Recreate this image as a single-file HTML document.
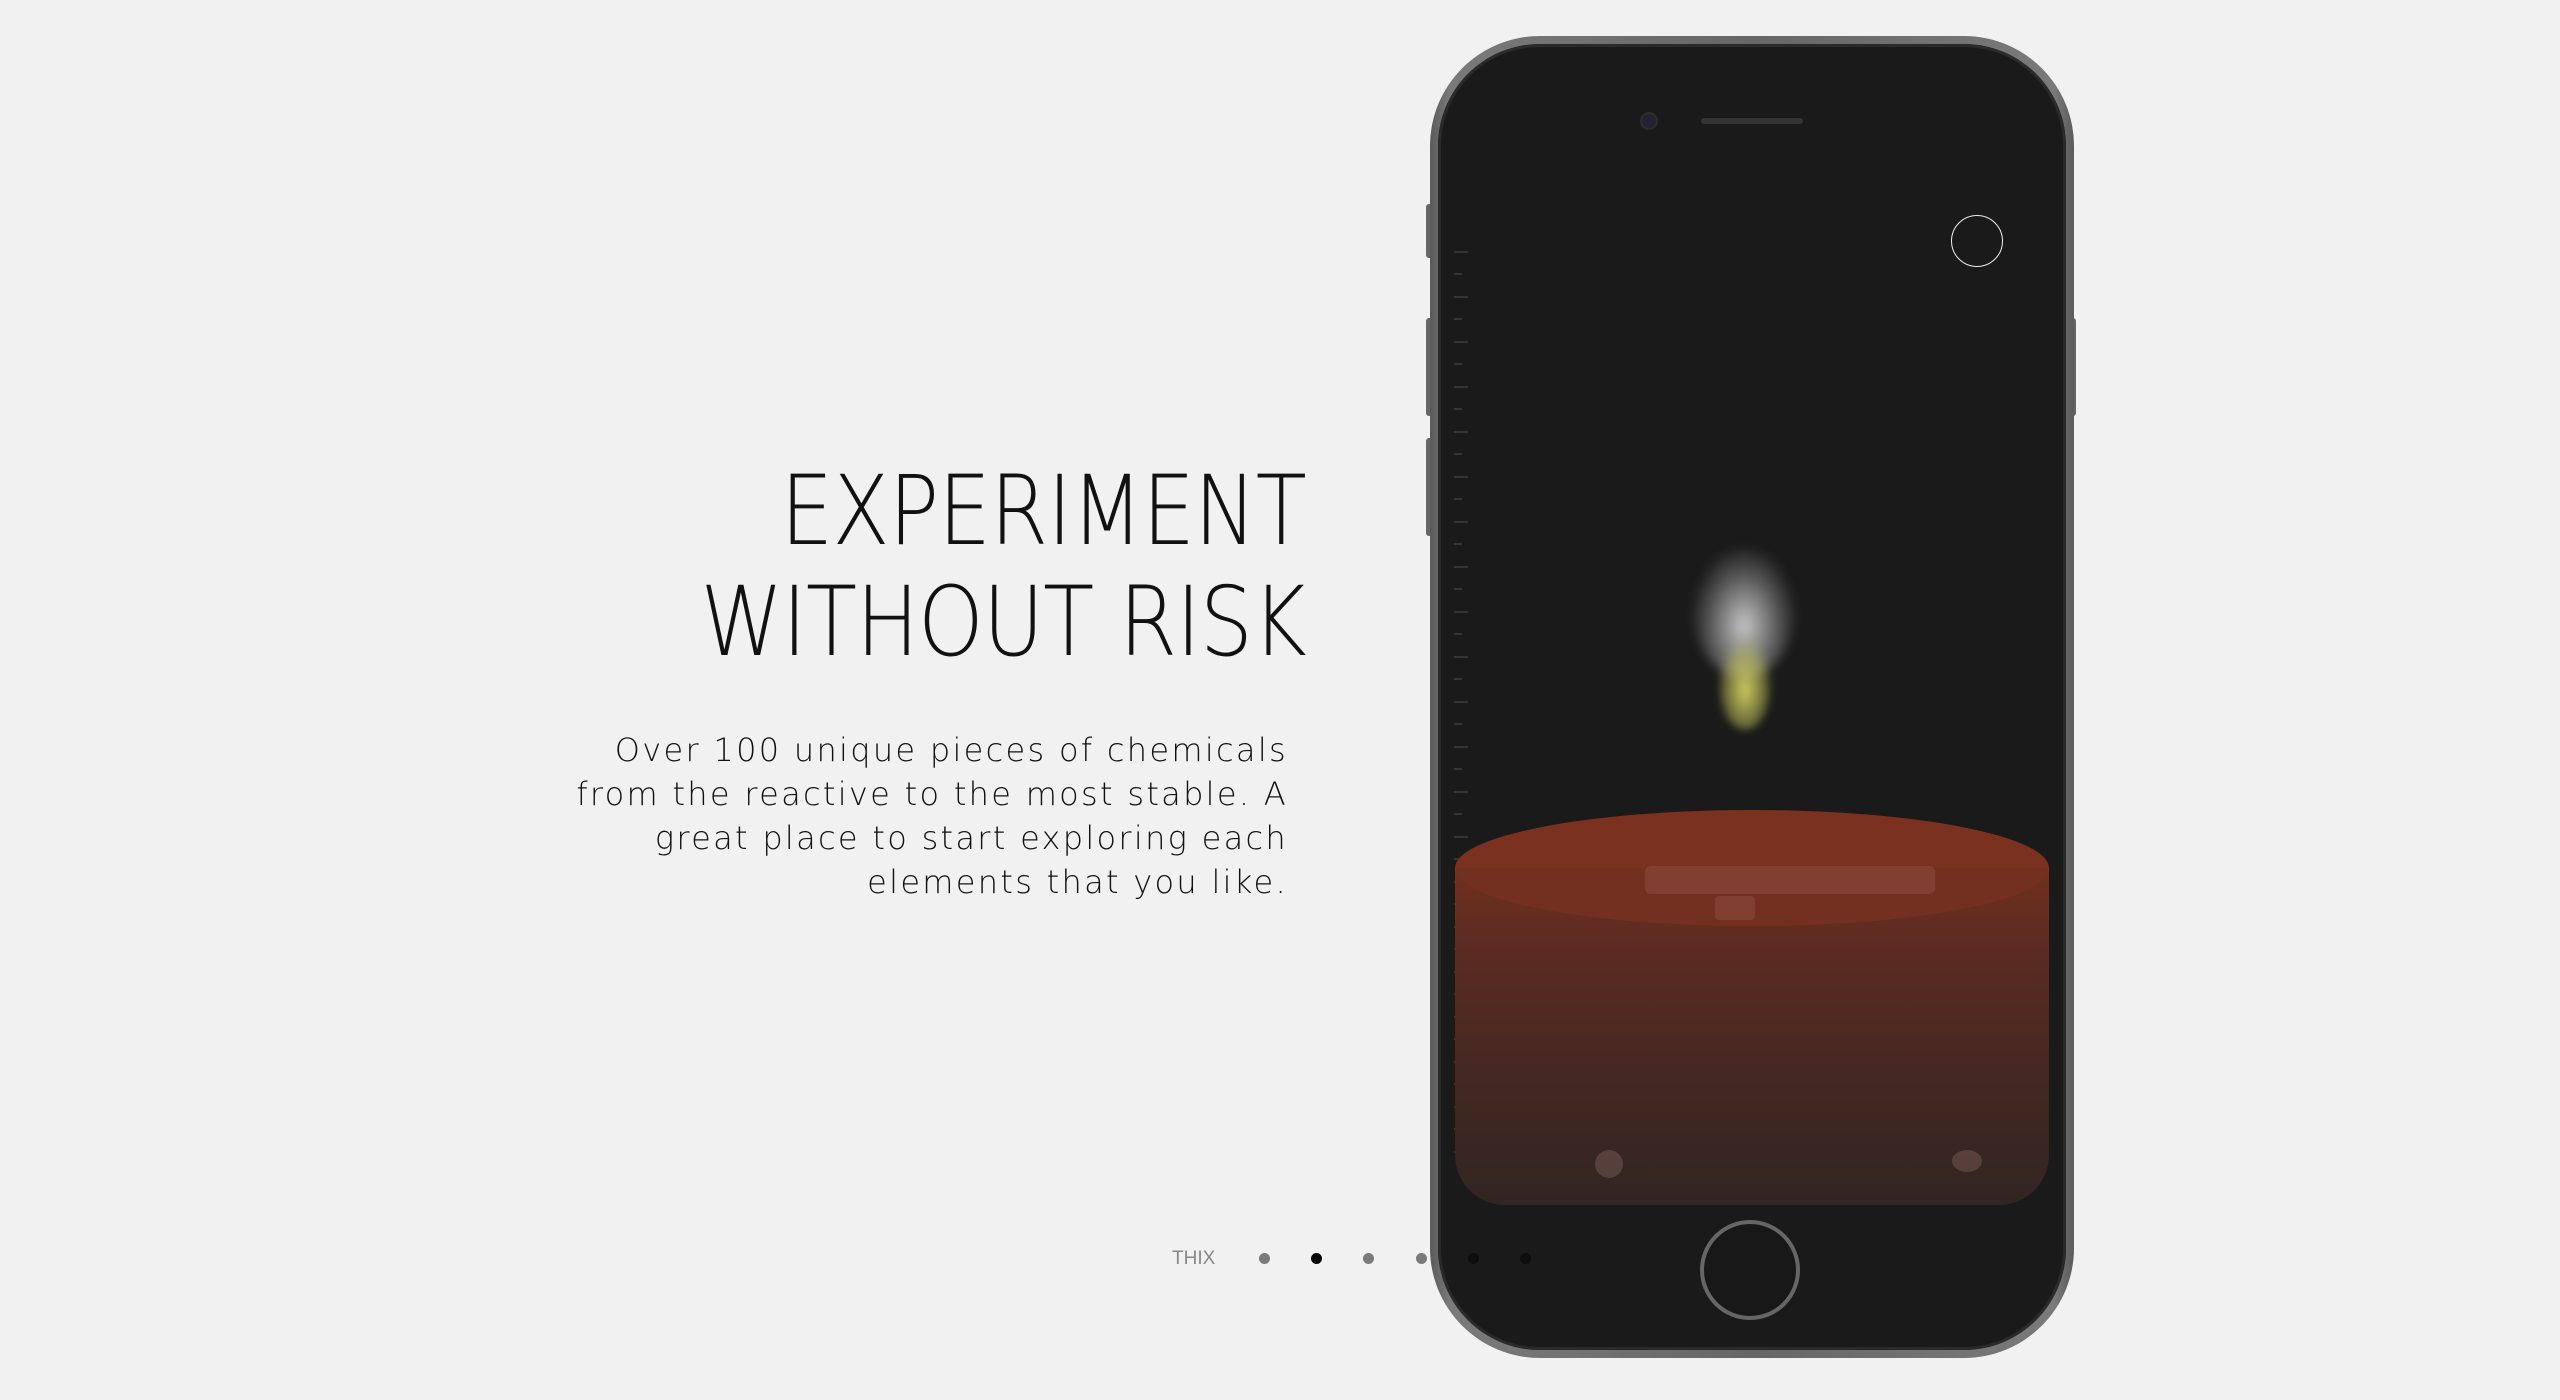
<!DOCTYPE html>
<html><head><style>
html,body{margin:0;padding:0;width:2560px;height:1400px;overflow:hidden;background:#f1f1f1;font-family:"Liberation Sans",sans-serif}
.h{position:absolute;right:1254px;font-family:"DejaVu Sans","Liberation Sans",sans-serif;font-weight:200;font-size:96px;color:#111;white-space:nowrap;transform:scaleX(0.87);transform-origin:right top;line-height:111px;letter-spacing:-1px}
.p{position:absolute;right:1272px;top:728px;width:760px;text-align:right;font-family:"DejaVu Sans","Liberation Sans",sans-serif;font-weight:200;font-size:32px;line-height:44px;letter-spacing:2.3px;color:#111}
.dot{position:absolute;width:11px;height:11px;border-radius:50%;top:1253px;background:#7a7a7a}
</style></head><body>
<div class="h" style="top:456px">EXPERIMENT</div>
<div class="h" style="top:567px">WITHOUT RISK</div>
<div class="p">Over 100 unique pieces of chemicals from the reactive to the most stable. A great place to start exploring each elements that you like.</div>

<div style="position:absolute;left:1426px;top:204px;width:8px;height:54px;background:#666;border-radius:3px"></div>
<div style="position:absolute;left:1426px;top:318px;width:8px;height:98px;background:#666;border-radius:3px"></div>
<div style="position:absolute;left:1426px;top:438px;width:8px;height:98px;background:#666;border-radius:3px"></div>
<div style="position:absolute;left:2068px;top:318px;width:8px;height:98px;background:#666;border-radius:3px"></div>
<div style="position:absolute;left:1430px;top:36px;width:644px;height:1322px;border-radius:110px;background:linear-gradient(90deg,#5a5a5a,#7a7a7a 3%,#666 50%,#7a7a7a 97%,#5a5a5a)"></div>
<div style="position:absolute;left:1438px;top:44px;width:628px;height:1306px;border-radius:102px;background:#1a1a1a;box-shadow:inset 0 0 0 3px #2a2a2a"></div>
<div style="position:absolute;left:1642px;top:114px;width:14px;height:14px;border-radius:50%;background:#223;box-shadow:0 0 0 2px #2c2c2c"></div>
<div style="position:absolute;left:1701px;top:118px;width:102px;height:6px;border-radius:3px;background:#333"></div>
<div style="position:absolute;left:1951px;top:215px;width:52px;height:52px;border-radius:50%;border:1.5px solid #eee;box-sizing:border-box"></div>
<svg style="position:absolute;left:1452px;top:240px" width="30" height="930">
<path d="M2 12h14M2 34h8M2 57h14M2 79h8M2 102h14M2 124h8M2 147h14M2 169h8M2 192h14M2 214h8M2 237h14M2 259h8M2 282h14M2 304h8M2 327h14M2 349h8M2 372h14M2 394h8M2 417h14M2 439h8M2 462h14M2 484h8M2 507h14M2 529h8M2 552h14M2 574h8M2 597h14M2 619h8M2 642h14M2 664h8M2 687h14M2 709h8M2 732h14M2 754h8M2 777h14M2 799h8M2 822h14M2 844h8M2 867h14M2 889h8M2 912h14" stroke="#3c3c3c" stroke-width="1.5"/>
</svg>
<div style="position:absolute;left:1692px;top:548px;width:104px;height:130px;border-radius:50% 50% 50% 50%/45% 45% 55% 55%;background:radial-gradient(ellipse at 50% 60%,rgba(230,230,230,.85),rgba(200,200,200,.3) 50%,rgba(30,30,30,0) 75%);filter:blur(5px)"></div>
<div style="position:absolute;left:1718px;top:640px;width:54px;height:90px;border-radius:50%;background:radial-gradient(ellipse at 50% 55%,rgba(215,215,100,.95),rgba(190,190,90,.5) 50%,rgba(30,30,30,0) 75%);filter:blur(4px)"></div>
<div style="position:absolute;left:1455px;top:868px;width:594px;height:337px;border-radius:0 0 50px 50px;background:linear-gradient(#70301f,#5a2b22 25%,#3d2722 75%,#302522)"></div>
<div style="position:absolute;left:1455px;top:810px;width:594px;height:116px;border-radius:50%;background:#7a3120"></div>
<div style="position:absolute;left:1455px;top:868px;width:594px;height:58px;border-radius:0 0 50% 50%/0 0 100% 100%;background:#733020"></div>
<div style="position:absolute;left:1645px;top:866px;width:290px;height:28px;background:rgba(160,100,90,.3);border-radius:6px"></div>
<div style="position:absolute;left:1715px;top:896px;width:40px;height:24px;background:rgba(160,100,90,.3);border-radius:4px"></div>
<div style="position:absolute;left:1595px;top:1150px;width:28px;height:28px;background:rgba(120,90,85,.5);border-radius:50%"></div>
<div style="position:absolute;left:1952px;top:1150px;width:30px;height:22px;background:rgba(120,90,85,.5);border-radius:50%"></div>
<div style="position:absolute;left:1700px;top:1220px;width:100px;height:100px;border-radius:50%;border:4px solid #666;box-sizing:border-box;background:#181818"></div>
<div style="position:absolute;left:1172px;top:1248px;font-size:19px;color:#888">THIX</div>
<div class="dot" style="left:1259px"></div>
<div class="dot" style="left:1311px;background:#000"></div>
<div class="dot" style="left:1363px"></div>
<div class="dot" style="left:1416px"></div>
<div class="dot" style="left:1468px;background:#0e0e0e"></div>
<div class="dot" style="left:1520px;background:#0e0e0e"></div>
</body></html>
